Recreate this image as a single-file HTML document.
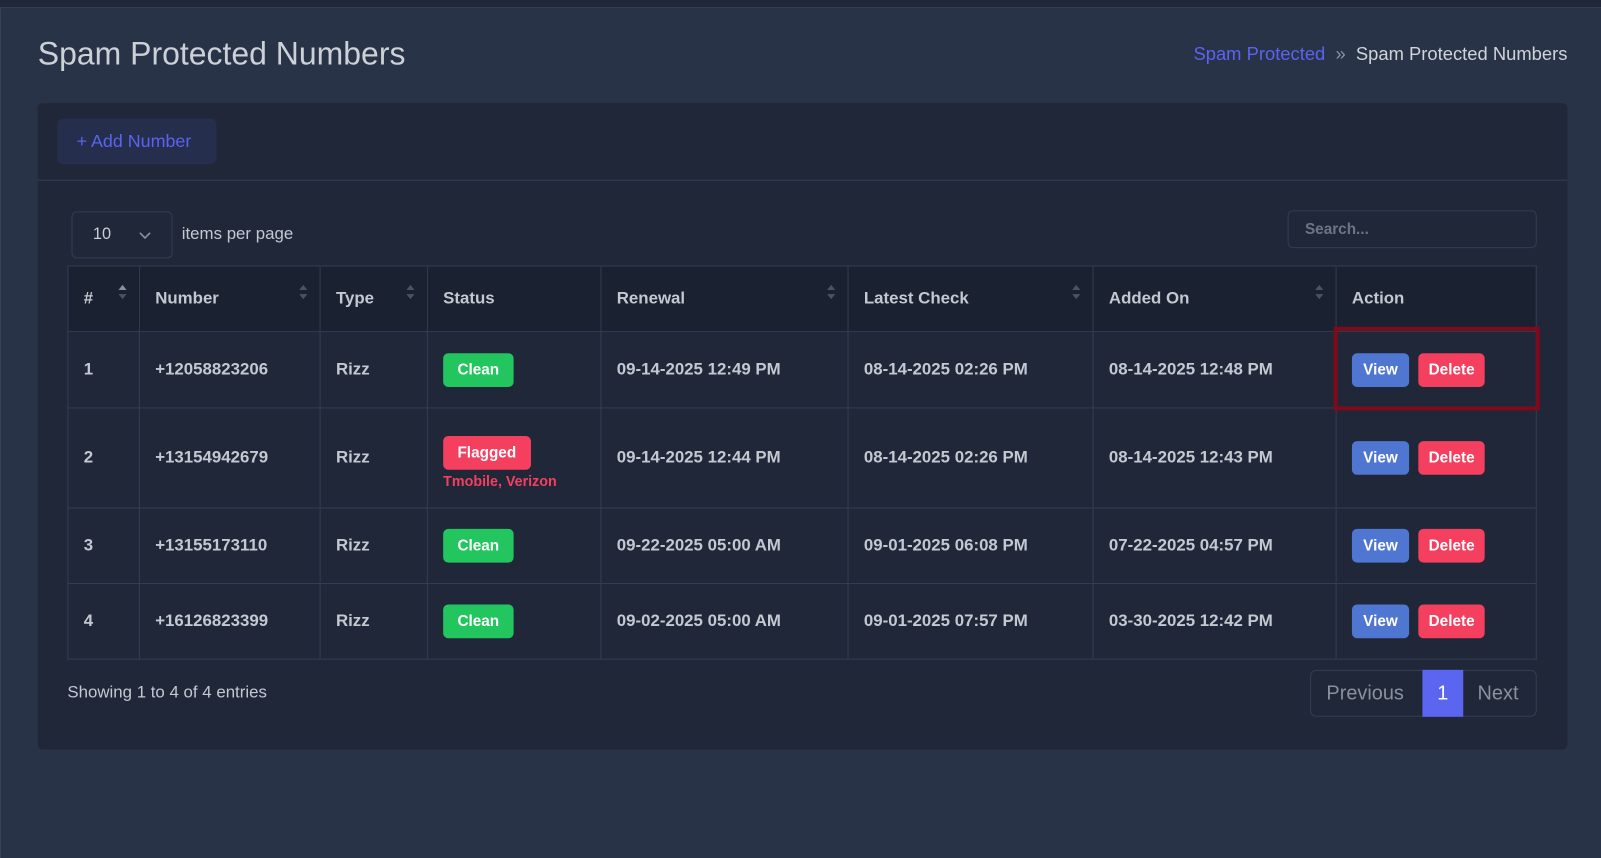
<!DOCTYPE html>
<html><head><style>
*{box-sizing:border-box;margin:0;padding:0}
html,body{width:1601px;height:858px;overflow:hidden;background:#283347}
#w{width:1568px;height:841px;transform:scale(1.0211);transform-origin:0 0;position:relative;font-family:"Liberation Sans",sans-serif;color:#c3c8d1}
.top{position:absolute;left:0;top:0;width:1568px;height:8px;background:#1f2738;border-bottom:1px solid #364157}
.lline{position:absolute;left:0;top:8px;width:1px;height:840px;background:#364157}
h1{position:absolute;left:37px;top:35px;font-size:31.3px;font-weight:400;color:#ccd0d7}
.bc{position:absolute;right:33px;top:43px;font-size:18px;color:#d0d4da}
.bc a{color:#5b63f0;text-decoration:none}
.bc .s{color:#8a92a2;margin:0 10px}
.card{position:absolute;left:37px;top:101px;width:1498px;height:633px;background:#1f2739;border-radius:5px}
.hdr{height:76px;border-bottom:1px solid #343e52;position:relative}
.add{position:absolute;left:19px;top:15px;width:156px;height:45px;background:#252e4c;border-radius:6px;color:#5b63f0;font-size:17.5px;line-height:45px;padding-left:19px}
.sel{position:absolute;left:33px;top:106px;width:99px;height:46px;border:1px solid #343e52;border-radius:5px;font-size:16px;line-height:44px;padding-left:20px;color:#c9cdd5}
.sel svg{position:absolute;left:64px;top:18px}
.ipp{position:absolute;left:141px;top:119px;font-size:16.5px;color:#c3c8d1}
.search{position:absolute;left:1224px;top:105px;width:244px;height:37px;border:1px solid #343e52;border-radius:5px;font-size:15px;color:#6d7585;padding:9px 16px;font-weight:bold}
table{position:absolute;left:29px;top:159px;width:1439px;border-collapse:collapse}
td,th{border:1px solid #343e52;text-align:left;padding:0 15px;font-size:16.5px;font-weight:bold;color:#c3c8d1;position:relative}
th{background:#1a2131;height:64px}
.ar{position:absolute;right:12px;top:17px;width:8px}
.b{display:inline-block;color:#fff;font-size:15px;font-weight:bold;border-radius:5px;padding:0 14px;height:33px;line-height:33px}
.g{background:#22c55e}.r{background:#f43f5e}.v{background:#4f76d0;padding:0 11px}
.act .r{padding:0 10px}
.ft{position:absolute;left:29px;top:568px;font-size:16.5px;color:#c3c8d1}
.pg{position:absolute;left:1246px;top:555px;width:222px;height:46px;border:1px solid #343e52;border-radius:6px;font-size:19.5px;color:#8a909c}
.pg span{position:absolute;top:11px}
.pg .one{left:109px;top:-1px;width:40px;height:46px;background:#5b66f0;color:#fff;text-align:center;line-height:46px}
.hl{position:absolute;left:1306px;top:320px;width:202px;height:82px;border:4px solid #7f0a1c}
</style></head><body><div id="w">
<div class="top"></div><div class="lline"></div>
<h1>Spam Protected Numbers</h1>
<div class="bc"><a>Spam Protected</a><span class="s">»</span>Spam Protected Numbers</div>
<div class="card">
<div class="hdr"><div class="add">+ Add Number</div></div>
<div class="sel">10<svg width="14" height="9" viewBox="0 0 14 9"><path d="M2 2l5 5 5-5" stroke="#8a909c" stroke-width="1.6" fill="none"/></svg></div>
<div class="ipp">items per page</div>
<div class="search">Search...</div>
<table>
<tr>
<th style="width:70px">#<svg class="ar" height="16" viewBox="0 0 8 16"><path d="M0 6L4 1 8 6z" fill="#8a909c"/><path d="M0 10L4 15 8 10z" fill="#4a5366"/></svg></th>
<th style="width:177px">Number<svg class="ar" height="16" viewBox="0 0 8 16"><path d="M0 6L4 1 8 6zM0 10L4 15 8 10z" fill="#4a5366"/></svg></th>
<th style="width:105px">Type<svg class="ar" height="16" viewBox="0 0 8 16"><path d="M0 6L4 1 8 6zM0 10L4 15 8 10z" fill="#4a5366"/></svg></th>
<th style="width:170px">Status</th>
<th style="width:242px">Renewal<svg class="ar" height="16" viewBox="0 0 8 16"><path d="M0 6L4 1 8 6zM0 10L4 15 8 10z" fill="#4a5366"/></svg></th>
<th style="width:240px">Latest Check<svg class="ar" height="16" viewBox="0 0 8 16"><path d="M0 6L4 1 8 6zM0 10L4 15 8 10z" fill="#4a5366"/></svg></th>
<th style="width:238px">Added On<svg class="ar" height="16" viewBox="0 0 8 16"><path d="M0 6L4 1 8 6zM0 10L4 15 8 10z" fill="#4a5366"/></svg></th>
<th>Action</th></tr>
<tr style="height:75px"><td>1</td><td>+12058823206</td><td>Rizz</td><td><span class="b g">Clean</span></td><td>09-14-2025 12:49 PM</td><td>08-14-2025 02:26 PM</td><td>08-14-2025 12:48 PM</td><td class="act"><span class="b v">View</span> &nbsp;<span class="b r">Delete</span></td></tr>
<tr style="height:98px"><td>2</td><td>+13154942679</td><td>Rizz</td><td><span class="b r" style="margin-top:8px">Flagged</span><div style="color:#f43f5e;font-size:14px;margin-top:3px">Tmobile, Verizon</div></td><td>09-14-2025 12:44 PM</td><td>08-14-2025 02:26 PM</td><td>08-14-2025 12:43 PM</td><td class="act"><span class="b v">View</span> &nbsp;<span class="b r">Delete</span></td></tr>
<tr style="height:74px"><td>3</td><td>+13155173110</td><td>Rizz</td><td><span class="b g">Clean</span></td><td>09-22-2025 05:00 AM</td><td>09-01-2025 06:08 PM</td><td>07-22-2025 04:57 PM</td><td class="act"><span class="b v">View</span> &nbsp;<span class="b r">Delete</span></td></tr>
<tr style="height:74px"><td>4</td><td>+16126823399</td><td>Rizz</td><td><span class="b g">Clean</span></td><td>09-02-2025 05:00 AM</td><td>09-01-2025 07:57 PM</td><td>03-30-2025 12:42 PM</td><td class="act"><span class="b v">View</span> &nbsp;<span class="b r">Delete</span></td></tr>
</table>
<div class="ft">Showing 1 to 4 of 4 entries</div>
<div class="pg"><span style="left:15px">Previous</span><span class="one">1</span><span style="left:163px">Next</span></div>
</div>
<div class="hl"></div>
</div></body></html>
